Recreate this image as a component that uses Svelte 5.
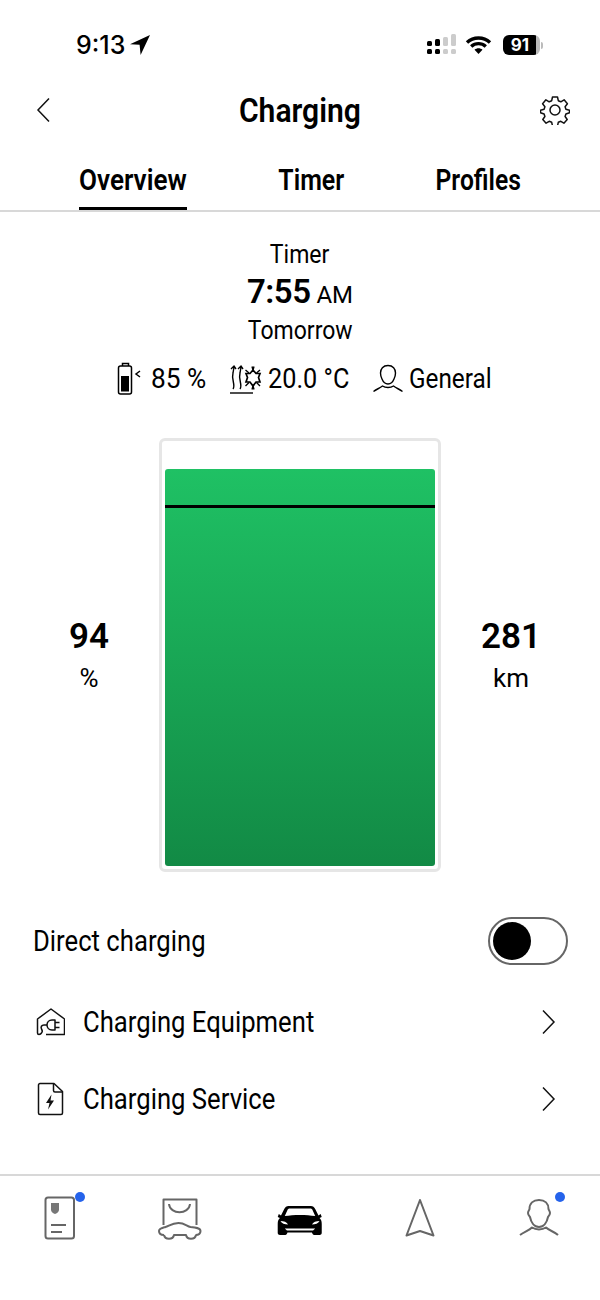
<script>
  const tabs = ['Overview', 'Timer', 'Profiles'];
  let active = 'Overview';
  let direct = false;
</script>

<div class="screen">
  <div class="status">
    <div class="clock">
      <span>9:13</span>
      <svg width="22" height="22" viewBox="0 0 22 22"><path d="M21 1 1 10.200l9.600.6 1 10.200z" fill="#000"/></svg>
    </div>
    <div class="status-icons">
      <svg width="30" height="22" viewBox="0 0 30 22">
        <g fill="#000"><rect x="1" y="7" width="5" height="5" rx="1.500"/><rect x="1" y="15" width="5" height="5" rx="1.500"/><rect x="9" y="5" width="5" height="7" rx="1.500"/><rect x="9" y="15" width="5" height="5" rx="1.500"/></g>
        <g fill="#ccc"><rect x="17" y="3" width="5" height="9" rx="1.500"/><rect x="17" y="15" width="5" height="5" rx="1.500"/><rect x="25" y="0" width="5" height="12" rx="1.500"/><rect x="25" y="15" width="5" height="5" rx="1.500"/></g>
      </svg>
      <svg class="wifi" width="27" height="20" viewBox="0 0 27 20">
        <path d="M2 7.500c6.500-6 16.500-6 23 0M6.200 11.500c4.200-3.800 10.400-3.800 14.600 0" fill="none" stroke="#000" stroke-width="3.400"/>
        <path d="M9.500 14.800c2.400-2 5.600-2 8 0l-4 4.200z" fill="#000"/>
      </svg>
      <div class="batt"><div class="batt-fill">91</div><i></i></div>
    </div>
  </div>

  <header class="top">
    <button class="icon-btn" aria-label="Back">
      <svg width="16" height="26" viewBox="0 0 16 26"><path d="M13 1.500 2 13l11 11.500" fill="none" stroke="#111" stroke-width="1.500"/></svg>
    </button>
    <h1><span class="narrow mid">Charging</span></h1>
    <button class="icon-btn" aria-label="Settings">
      <svg width="30" height="30" viewBox="0 0 30 30" fill="none" stroke="#111" stroke-width="1.500" stroke-linejoin="round">
        <path d="M12.500 2h5l.8 3.700 2.500 1.100 3.300-2 3.300 3.900-2.300 3 .8 2.500 3.600 1.100v2.400l-3.600 1.300-.8 2.500 2.100 3-3.300 3.700-3.100-1.900-2.500 1-.8 3.700h-5l-.8-3.700-2.500-1-3.100 1.900-3.300-3.700 2.100-3-.8-2.500-3.600-1.300v-2.400l3.600-1.100.8-2.500-2.300-3 3.300-3.900 3.300 2 2.500-1.100z"/>
        <circle cx="15" cy="15" r="5"/>
      </svg>
    </button>
  </header>

  <nav class="tabs">
    {#each tabs as tab}
      <button class="tab tab-{tab.toLowerCase()}" class:active={tab === active} on:click={() => (active = tab)}><span class="narrow mid">{tab}</span></button>
    {/each}
  </nav>

  <section class="timer">
    <div class="line"><span class="narrow mid">Timer</span></div>
    <div class="time"><b>7:55</b> AM</div>
    <div class="line"><span class="narrow mid">Tomorrow</span></div>
  </section>

  <div class="stats">
    <div class="stat">
      <svg width="30" height="34" viewBox="0 0 30 34" fill="none" stroke="#000" stroke-width="1.500">
        <rect x="2.500" y="4" width="13" height="28" rx="2"/>
        <path d="M6.500 4V1.500h6V4"/>
        <rect x="5" y="14" width="8" height="15.500" fill="#000" stroke="none"/>
        <path d="M24 9 20 12l4 3"/>
      </svg>
      <span class="val w-batt">85 %</span>
    </div>
    <div class="stat">
      <svg width="34" height="32" viewBox="0 0 34 32" fill="none" stroke="#000" stroke-width="1.400">
        <path d="M4 26c3-4-2-9 0-16l1-6M2 6l3-3 2 3M11 26c3-4-2-9 0-16l1-6M9 6l3-3 2 3"/>
        <path d="M1 30h23"/>
        <path d="M17 10.500h4l3-3.500 3 3.500h4l-1.500 4 1.500 4.500h-4l-3 4-3-4h-4l1.500-4.500z" stroke-width="1.700"/>
        <path d="M23 3.500 24 7l1-3.500M23 26.500l1-3.500 1 3.500M31 7l-3.500 3M16.500 7l3.500 3M31 23l-3.500-3.500M16.500 23l3.500-3.500"/>
      </svg>
      <span class="val w-temp">20.0 °C</span>
    </div>
    <div class="stat">
      <svg width="32" height="30" viewBox="0 0 32 30" fill="none" stroke="#000" stroke-width="1.400" stroke-linejoin="round">
        <path d="M16 1.500c-5 0-7.500 3.300-7.500 7.500 0 2 .5 4 1.500 6 1 2.500 2 5 6 5s5-2.500 6-5c1-2 1.500-4 1.500-6 0-4.200-2.500-7.500-7.500-7.500z"/>
        <path d="M1.500 27.500c3-2.500 6-3 9-5.500 3 2 8 2 11 0 3 2.500 6 3 9 5.500"/>
      </svg>
      <span class="val w-prof">General</span>
    </div>
  </div>

  <section class="level">
    <div class="readout"><b>94</b><span>%</span></div>
    <div class="cell">
      <div class="fill"><div class="target"></div></div>
    </div>
    <div class="readout"><b>281</b><span>km</span></div>
  </section>

  <div class="row direct">
    <span class="narrow">Direct charging</span>
    <button class="toggle" aria-label="Direct charging" on:click={() => (direct = !direct)}><i class:on={direct}></i></button>
  </div>

  <div class="row link">
    <svg width="32" height="32" viewBox="-2 0 32 32" fill="none" stroke="#111" stroke-width="1.500" stroke-linejoin="round">
      <path d="M4 28.500c-1 0-1.500-.5-1.500-1.500V13L16 3l13.500 10v15.500H11"/>
      <path d="M20 14h-3c-3 0-5 2.200-5 5s2 5 5 5h3z"/>
      <path d="M20 16.500h4.500M20 21.500h4.500"/>
      <path d="M12 19H9c-2.500 0-3.500 2-2.500 4 1 1.500 1 3 0 4-.5.7-1.500 1.300-2.500 1.500"/>
    </svg>
    <span class="narrow">Charging Equipment</span>
    <svg class="chev" width="16" height="26" viewBox="0 0 16 26"><path d="M3 1.500 14 13 3 24.500" fill="none" stroke="#111" stroke-width="1.500"/></svg>
  </div>

  <div class="row link">
    <svg width="32" height="34" viewBox="-1 0 32 34" fill="none" stroke="#111" stroke-width="1.500" stroke-linejoin="round">
      <path d="M20 1.500H6a1.500 1.500 0 0 0-1.500 1.500v28A1.500 1.500 0 0 0 6 32.500h21a1.500 1.500 0 0 0 1.500-1.500V9.500z"/>
      <path d="M19.500 2v6.500a1.500 1.500 0 0 0 1.500 1.500h7.500"/>
      <path d="M17.500 12.500 12 21h3.500l-1.500 6.500 6-9h-3.500z" fill="#111" stroke="none"/>
    </svg>
    <span class="narrow">Charging Service</span>
    <svg class="chev" width="16" height="26" viewBox="0 0 16 26"><path d="M3 1.500 14 13 3 24.500" fill="none" stroke="#111" stroke-width="1.500"/></svg>
  </div>

  <nav class="bottom">
    <div class="nav-item">
      <svg width="44" height="50" viewBox="0 0 44 50" fill="none" stroke="#666" stroke-width="2" stroke-linejoin="round">
        <rect x="7.500" y="4.500" width="28.500" height="41" rx="2.500"/>
        <path d="M13 10h8v6.500c0 2-1.500 3.500-4 4.500-2.500-1-4-2.500-4-4.500z" fill="#777" stroke="none"/>
        <path d="M13 32h15M13 39h11"/>
      </svg>
      <i class="dot"></i>
    </div>
    <div class="nav-item">
      <svg width="46" height="46" viewBox="0 0 46 46" fill="none" stroke="#666" stroke-width="2" stroke-linejoin="round">
        <path d="M6.500 30V4.500h33V30"/>
        <path d="M12 9c1 11 20 11 21 0"/>
        <path d="M7 40c-3.500 0-5-1.500-5-4 0-2.500 3-3 6.500-4 3-.5 6-4 13-4 6 0 8 3 12 4 5 .5 10 1 10 4 0 2.500-1.500 4-5 4"/>
        <path d="M7 40c1 5 9 5 10 0h12c1 5 9 5 10 0"/>
      </svg>
    </div>
    <div class="nav-item">
      <svg width="50" height="40" viewBox="0 0 46 40" preserveAspectRatio="none">
        <path fill="#000" fill-rule="evenodd" d="M13 8h20c2 0 3 1 4 3l3 6.500 2-1.500 1 3-2 1c1.500 1.500 2 3 2 6v9c0 1-1 2-2 2h-5c-1 0-1.500-1-2-2.500H11.500c-.5 1.500-1 2.500-2 2.500h-5c-1 0-2-1-2-2v-9c0-3 .5-4.500 2-6l-2-1 1-3 2 1.500 3-6.500c1-2 2-3 4-3zM13.500 10.500c-1 0-1.500.5-2 1.500l-2.500 6c8-1.500 20-1.500 28 0l-2.500-6c-.5-1-1-1.500-2-1.500zM5 23c1 2.500 4 3.500 7 3.500-1-2.500-4-3.500-7-3.500zM41 23c-3 0-6 1-7 3.500 3 0 6-1 7-3.500zM9 30.500l2 2h24l2-2z"/>
      </svg>
    </div>
    <div class="nav-item">
      <svg width="32" height="44" viewBox="0 0 32 44" fill="none" stroke="#666" stroke-width="2" stroke-linejoin="round"><path d="M16 4 2.500 39.500 16 35l13.500 4.500z"/></svg>
    </div>
    <div class="nav-item">
      <svg width="44" height="44" viewBox="0 0 44 44" fill="none" stroke="#666" stroke-width="2" stroke-linejoin="round">
        <path d="M21 4c-6 0-9.500 3.500-9.500 9 0 1-1.500 2-1.500 4 0 2 1 3 2 4 1 5 4 10 9 10s8-5 9-10c1-1 2-2 2-4s-1.500-3-1.500-4c0-5.500-3.500-9-9.500-9z"/>
        <path d="M2 39c4-3 9-4.500 12-7.500 4 2.500 10 2.500 14 0 3 3 9 4.500 12 7.500"/>
      </svg>
      <i class="dot"></i>
    </div>
  </nav>
</div>

<style>
  :global(body) {
    margin: 0;
    background: #fff;
  }

  .screen {
    position: relative;
    width: 600px;
    height: 1300px;
    overflow: hidden;
    color: #000;
    font-family: Roboto, "Liberation Sans", sans-serif;
    font-size: 29px;
  }

  button {
    background: none;
    border: none;
    padding: 0;
    font: inherit;
    color: inherit;
    cursor: pointer;
  }

  /* the original typeface is condensed, Roboto has no narrow cut here */
  .narrow {
    display: inline-block;
    white-space: nowrap;
    transform: scaleX(0.885);
    transform-origin: left center;
  }

  .narrow.mid {
    transform-origin: center;
  }

  .status {
    height: 70px;
    padding: 20px 55px 0 76px;
    box-sizing: border-box;
    display: flex;
    justify-content: space-between;
    align-items: flex-start;
  }

  .clock {
    display: flex;
    align-items: center;
    gap: 4px;
    height: 50px;
    font: 500 25px Inter, Roboto, sans-serif;
  }

  .status-icons {
    display: flex;
    align-items: center;
    gap: 9px;
    height: 50px;
  }

  .wifi {
    margin-left: 0;
    margin-right: 2px;
  }

  .batt {
    display: flex;
    align-items: center;
    width: 42px;
  }

  .batt-fill {
    width: 37px;
    height: 20px;
    border-radius: 6px;
    background: linear-gradient(90deg, #000 88%, #bbb 88%);
    color: #fff;
    font: 700 17px/20px Inter, sans-serif;
    text-align: center;
    padding-right: 3px;
    box-sizing: border-box;
  }

  .batt i {
    width: 2px;
    height: 7px;
    margin-left: 1px;
    background: #bbb;
    border-radius: 0 2px 2px 0;
  }

  .top {
    height: 80px;
    padding: 0 30px 0 36px;
    display: flex;
    align-items: center;
    justify-content: space-between;
  }

  .icon-btn {
    display: flex;
  }

  h1 {
    margin: 0 0 0 7px;
    font-size: 34px;
    font-weight: 600;
    width: 122px;
    display: flex;
    justify-content: center;
  }

  .tabs {
    height: 60px;
    box-sizing: content-box;
    border-bottom: 2px solid #d8d8d8;
    display: flex;
    gap: 92px;
    padding-left: 79px;
  }

  .tab {
    height: 60px;
    padding-top: 2px;
    box-sizing: border-box;
    font-size: 29px;
    font-weight: 600;
    border-bottom: 3px solid transparent;
    display: flex;
    justify-content: center;
    align-items: center;
  }

  .tab-overview { width: 108px; }
  .tab-overview span { transform: scaleX(0.9); }
  .tab-timer { width: 65px; }
  .tab-timer span { transform: scaleX(0.86); }
  .tab-profiles { width: 85px; }
  .tab-profiles span { transform: scaleX(0.85); }

  .tab.active {
    border-bottom-color: #000;
  }

  .timer {
    margin-top: 23px;
    text-align: center;
    font-size: 26px;
  }

  .line {
    height: 38px;
    line-height: 38px;
  }

  .time {
    height: 38px;
    line-height: 38px;
    font-size: 24px;
  }

  .time b {
    font-size: 33px;
    font-weight: 600;
    letter-spacing: -0.5px;
  }

  .stats {
    margin-top: 10px;
    padding-left: 5px;
    display: flex;
    justify-content: center;
    gap: 23px;
    height: 40px;
    align-items: center;
    font-size: 27px;
  }

  .stat {
    display: flex;
    align-items: center;
    gap: 5px;
  }

  .val {
    display: inline-block;
    white-space: nowrap;
    transform-origin: left center;
  }

  .w-batt { width: 55px; transform: scaleX(0.973); }
  .w-temp { width: 81px; transform: scaleX(0.936); }
  .w-prof { width: 80px; transform: scaleX(0.9); }

  .level {
    margin-top: 39px;
    padding: 0 19px;
    display: flex;
    align-items: center;
    justify-content: center;
  }

  .readout {
    width: 140px;
    text-align: center;
    display: flex;
    flex-direction: column;
    align-items: center;
    margin-top: 4px;
  }

  .readout b {
    font: 600 35px/42px Roboto, sans-serif;
  }

  .readout span {
    font-size: 26px;
    line-height: 40px;
  }

  .cell {
    width: 282px;
    height: 434px;
    box-sizing: border-box;
    border: 3px solid #e6e6e6;
    border-radius: 6px;
    padding: 28px 3px 3px;
  }

  .fill {
    height: 100%;
    border-radius: 3px;
    background: linear-gradient(180deg, #1fc164 0%, #128a45 100%);
    padding-top: 36px;
    box-sizing: border-box;
  }

  .target {
    height: 3px;
    background: #000;
  }

  .row {
    display: flex;
    align-items: center;
    padding: 0 32px 0 33px;
  }

  .direct {
    margin-top: 45px;
    height: 48px;
    justify-content: space-between;
  }

  .toggle {
    width: 80px;
    height: 48px;
    box-sizing: border-box;
    border: 2px solid #666;
    border-radius: 24px;
    display: flex;
    align-items: center;
    padding-left: 3px;
  }

  .toggle i {
    width: 38px;
    height: 38px;
    border-radius: 50%;
    background: #000;
  }

  .toggle i.on {
    margin-left: 30px;
  }

  .link {
    height: 77px;
    gap: 18px;
    padding-right: 44px;
  }

  .direct + .link {
    margin-top: 18px;
  }

  .link span {
    flex: 1;
  }

  .bottom {
    position: absolute;
    top: 1174px;
    left: 0;
    width: 600px;
    height: 86px;
    border-top: 2px solid #d8d8d8;
    display: grid;
    grid-template-columns: repeat(5, 1fr);
    box-sizing: border-box;
  }

  .nav-item {
    position: relative;
    display: flex;
    align-items: center;
    justify-content: center;
  }

  .dot {
    position: absolute;
    top: 16px;
    left: 75px;
    width: 10px;
    height: 10px;
    border-radius: 50%;
    background: #2563eb;
  }
</style>
